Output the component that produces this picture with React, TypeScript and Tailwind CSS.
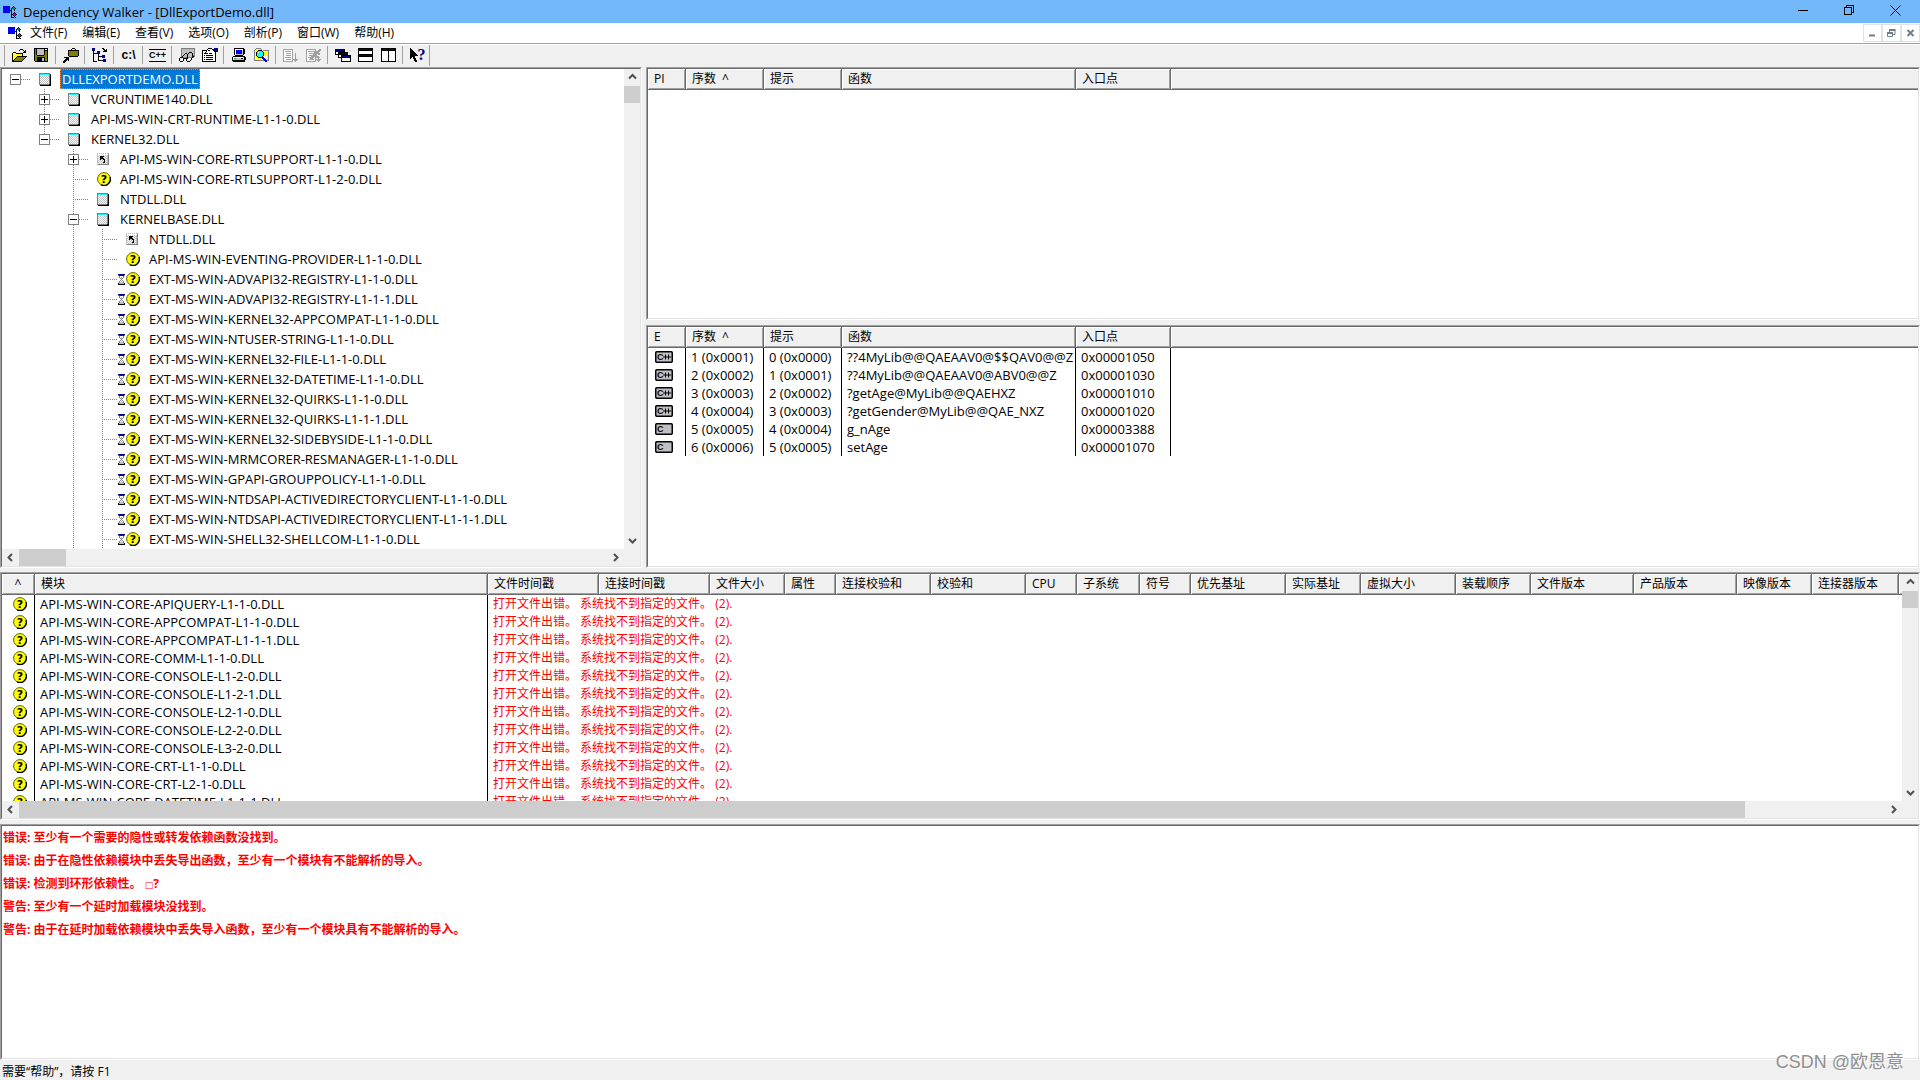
import React from "react";
import { clsx } from "clsx";

const PALETTE: Record<string, string> = {
  k: "#000000",
  o: "#808000",
  y: "#ffff00",
  b: "#0000ff",
  n: "#000080",
  w: "#ffffff",
  g: "#808080",
  s: "#c0c0c0",
  a: "#a0a0a0",
  c: "#00ffff",
  t: "#008080",
  m: "#c000c0",
  e: "#00c000",
};

const APP_ICON = [
  "bbbbbbb...k...",
  "bbbbbbb..ktk..",
  "bbbbbbb.ktttk.",
  "bbbbbbb.k.tk..",
  "bbbbbbbkk..k..",
  "bbbbbbb.k.....",
  "bbbbbbb.k..k..",
  "........k.kmk.",
  "........kkmmmk",
  "........k.kmk.",
  "........k..k..",
  "........kkkek.",
];

const OPEN = [
  ".........kkk....",
  "........k...k.k.",
  ".............kk.",
  "..kkk.......kkk.",
  ".kywykkkkkkk....",
  ".kwywywywywk....",
  ".kywywywywyk....",
  ".kwywykkkkkkkkkk",
  ".kywykooooooook.",
  ".kwykooooooook..",
  ".kykooooooook...",
  ".kkooooooook....",
  ".kkkkkkkkkk.....",
];

const SAVE = [
  "kkkkkkkkkkkkkk..",
  "kokssssssskwwk..",
  "kokssssssskkkk..",
  "kokssssssskook..",
  "kokssssssskook..",
  "kokssssssskook..",
  "kokssssssskook..",
  "kookkkkkkkoook..",
  "kooooooooooook..",
  "kookkkkkkkkook..",
  "kookkkkksskook..",
  "kookkkkksskook..",
  "kookkkkksskook..",
  ".kkkkkkkkkkkkk..",
];

const CONFIGURE = [
  ".........kkk....",
  "........k...k...",
  ".....kkkkkkkkkkk",
  ".....koooooooook",
  ".....koooooooook",
  ".....koooooooook",
  ".....koooooooook",
  ".....koooooooook",
  "......kkkkkkkkk.",
  ".kkkkk..........",
  "...kkk..........",
  "..kkkk..........",
  ".kkk.k..........",
  "kkk.............",
  "kk..............",
];

const AUTO_EXPAND = [
  "nnn.......kk....",
  "nbn........kk.k.",
  "nnn.........kkk.",
  ".k...nnn...kkkk.",
  ".k...nbn........",
  ".kkkknnn........",
  ".k....k.........",
  ".k....k...nnn...",
  ".k....kkkknbn...",
  ".k....k...nnn...",
  ".k....k.........",
  ".k....k....nnn..",
  ".k....kkkkknbn..",
  ".kkkk......nnn..",
];

const VIEW = [
  "..gggggggggggggg",
  "..gccccccccccccg",
  "..gssssssssssssg",
  "..gssssssssssssg",
  "..gssssssskkkssg",
  "..gssskksksssksg",
  "..gssksskssssksg",
  "..gsksssksssskgg",
  "..gkssssksssskkg",
  ".kkkggggkggggkg.",
  "k...kkkkk...k...",
  "k...k..k....k...",
  "k...k..k...k....",
  ".kkk....kkk.....",
];

const PROPERTIES = [
  "......kkkk..nnnn",
  ".....kwwwwknnnnn",
  "kkkkkwkkwwwkkknn",
  "kwwwkwwwwwwwkkkn",
  "kwwkwwwwwwwwwk..",
  "kwkkkkwkkkwwwk..",
  "kwwwwwwwwwwwwk..",
  "kwkwkkkkkkkwwk..",
  "kwwwwwwwwwwwwk..",
  "kwkwkkkkkkkwwk..",
  "kwwwwwwwwwwwwk..",
  "kwkwkkkkkkkwwk..",
  "kwwwwwwwwwwwwk..",
  "kkkkkkkkkkkkkk..",
];

const COMPUTER = [
  "...kkkkkkkkkk...",
  "...kwwwwwwwwkk..",
  "...kwbbbbbbskk..",
  "...kwbbbbbbskk..",
  "...kwbbbbbbskk..",
  "...kwbbbbbbskk..",
  "...kwsssssssk...",
  "....kkkkkkkk....",
  "..kkkkkkkkkkkk..",
  ".kwwwwwwwwwwskk.",
  ".kweessssskkskk.",
  ".kwsssssssssskk.",
  ".kkkkkkkkkkkkk..",
  "..kkkkkkkkkkkk..",
];

const SEARCH = [
  "..ggggg.........",
  ".gywywyg........",
  "gwywkkkkwgggggg.",
  "gywkcccckywywyg.",
  "gwkcwcccckywywg.",
  "gykcccccckwywyg.",
  "gwkcccccckywywg.",
  "gykcccccckwywyg.",
  "gwykcccckywywyg.",
  "gywykkkkbbwywyg.",
  "gwywywywbbbywyg.",
  "gywywywywbbbwyg.",
  "ggggggggggbbbgg.",
  "...........bb...",
];

const NEXT_DOC = [
  "aaaaaaaaaa......",
  "awwwwwwwwa......",
  "awaaaaaawa......",
  "awwwwwwwwa......",
  "awwaaaaawa..a...",
  "awwwwwwwwa..a...",
  "awwaaaaawa..a...",
  "awwwwwwwwa..a...",
  "awaaaaaawa..a...",
  "awwwwwwwwa..a...",
  "awwaaaaawaaaaaa.",
  "awwwwwwwwa.aaa..",
  "aaaaaaaaaa..a...",
];

const CLEAR_DOC = [
  "aaaaaaaaaa...aa.",
  "awwwwwwwwa..aaa.",
  "awaaaaaaaaaaaa..",
  "awwwwwwwaaaaa...",
  "awwaaaaaaaaaaa..",
  "awwwwwwaaaa.aa..",
  "awwaaaaaaaa.....",
  "awwwwaaaaaaaa...",
  "awaaaaaawaaaaa..",
  "awwwaaawwa..a...",
  "awwaaaaawaaaaaa.",
  "awwwwwwwwa.aaa..",
  "aaaaaaaaaa..a...",
];

const CASCADE = [
  "kkkkkkkkkk......",
  "knnnnnnnnk......",
  "kkkkkkkkkk......",
  "kwwkkkkkkkkkk...",
  "kwwknnnnnnnnk...",
  "kkkkkkkkkkkkk...",
  "...kwwkkkkkkkkkk",
  "...kwwknnnnnnnnk",
  "...kkkkkkkkkkkkk",
  "......kwwwwwwwwk",
  "......kwwwwwwwwk",
  "......kwwwwwwwwk",
  "......kkkkkkkkkk",
];

const TILE_H = [
  "kkkkkkkkkkkkkkk.",
  "knnnnnnnnnnnnnk.",
  "kkkkkkkkkkkkkkk.",
  "kwwwwwwwwwwwwwk.",
  "kwwwwwwwwwwwwwk.",
  "kwwwwwwwwwwwwwk.",
  "kkkkkkkkkkkkkkk.",
  "knnnnnnnnnnnnnk.",
  "kkkkkkkkkkkkkkk.",
  "kwwwwwwwwwwwwwk.",
  "kwwwwwwwwwwwwwk.",
  "kwwwwwwwwwwwwwk.",
  "kwwwwwwwwwwwwwk.",
  "kkkkkkkkkkkkkkk.",
];

const TILE_V = [
  "kkkkkkkkkkkkkkk.",
  "knnnnnnknnnnnnk.",
  "kkkkkkkkkkkkkkk.",
  "kwwwwwwkwwwwwwk.",
  "kwwwwwwkwwwwwwk.",
  "kwwwwwwkwwwwwwk.",
  "kwwwwwwkwwwwwwk.",
  "kwwwwwwkwwwwwwk.",
  "kwwwwwwkwwwwwwk.",
  "kwwwwwwkwwwwwwk.",
  "kwwwwwwkwwwwwwk.",
  "kwwwwwwkwwwwwwk.",
  "kwwwwwwkwwwwwwk.",
  "kkkkkkkkkkkkkkk.",
];

const POINTER = [
  "k.......",
  "kk......",
  "kkk.....",
  "kkkk....",
  "kkkkk...",
  "kkkkkk..",
  "kkkkkkk.",
  "kkkkkkkk",
  "kkkkk...",
  "kk.kk...",
  "k..kkk..",
  "....kk..",
  "....kkk.",
  ".....kk.",
];

const MODULE = [
  "ggggggggggg.",
  "gcccccccccgk",
  "gwwwwwwwwwgk",
  "gswswswswsgk",
  "gwswswswswgk",
  "gswswswswsgk",
  "gwswswswswgk",
  "gswswswswsgk",
  "gwswswswswgk",
  "gswswswswsgk",
  "gwswswswswgk",
  "ggggggggggkk",
  ".kkkkkkkkkkk",
];

const DUPLICATE = [
  "swcwcwcwcwcs",
  "swwwwwwwwwwg",
  "swswswswswsg",
  "sswkkkkswssg",
  "swskkkswswsg",
  "sswkkkkswssg",
  "swsksskkswsg",
  "sswswswkwssg",
  "swswswskswsg",
  "sswswskkwssg",
  "swswswswswsg",
  "sggggggggggg",
];

const HOURGLASS = [
  "nnnnnnn",
  "gbbbbbg",
  ".gwwwg.",
  ".gwswg.",
  "..gsg..",
  "...g...",
  "..gwg..",
  ".gwswg.",
  ".gsssg.",
  "ksssssk",
  "kkkkkkk",
];

function Pixels({ rows }: { rows: string[] }) {
  return (
    <svg
      width={rows[0].length}
      height={rows.length}
      viewBox={`0 0 ${rows[0].length} ${rows.length}`}
      shapeRendering="crispEdges"
      className="shrink-0"
      aria-hidden="true"
    >
      {rows.map((row, y) =>
        row.split("").map((p, x) => (PALETTE[p] ? <rect key={`${x}-${y}`} x={x} y={y} width="1" height="1" fill={PALETTE[p]} /> : null))
      )}
    </svg>
  );
}

function MissingIcon() {
  return (
    <svg width="14" height="14" viewBox="0 0 14 14" className="shrink-0" aria-hidden="true">
      <circle cx="7" cy="7" r="6.4" fill="#ffff00" stroke="#606000" strokeWidth="1" />
      <path d="M13 5 A6.4 6.4 0 0 1 4 12.8" fill="none" stroke="#000" strokeWidth="1.3" />
      <text x="7" y="11" textAnchor="middle" fontSize="11" fontWeight="900" fontFamily="DejaVu Sans" fill="#000">?</text>
    </svg>
  );
}

function ExportIcon({ label }: { label: string }) {
  return (
    <svg width="18" height="12" viewBox="0 0 18 12" aria-hidden="true">
      <rect x="0.75" y="0.75" width="16.5" height="10.5" rx="1" fill="#c0c0c0" stroke="#000" strokeWidth="1.5" />
      <text x="2" y="9" fontSize="9" fontWeight="700" fontFamily="Liberation Sans" fill="#000">{label.slice(0, 1)}</text>
      {label.length > 1 && <path d="M8 6h8M10.5 3.5v5M13.5 3.5v5" stroke="#000" strokeWidth="1" />}
    </svg>
  );
}

function Sunken({ children, className }: { children?: React.ReactNode; className?: string }) {
  return (
    <section className={clsx("min-h-0 min-w-0 overflow-hidden border border-t-[#a0a0a0] border-l-[#a0a0a0] border-r-white border-b-white", className)}>
      <div className="h-full overflow-hidden border border-t-[#696969] border-l-[#696969] border-r-[#e3e3e3] border-b-[#e3e3e3] bg-white">
        {children}
      </div>
    </section>
  );
}

const ARROWS = {
  up: "M5 9.5 8.5 6 12 9.5",
  down: "M5 7 8.5 10.5 12 7",
  left: "M10 5 6.5 8.5 10 12",
  right: "M7 5 10.5 8.5 7 12",
};

function ArrowButton({ dir }: { dir: keyof typeof ARROWS }) {
  return (
    <button type="button" aria-label={`Scroll ${dir}`} className="size-[17px] shrink-0">
      <svg width="17" height="17" viewBox="0 0 17 17">
        <path d={ARROWS[dir]} fill="none" stroke="#505050" strokeWidth="2" />
      </svg>
    </button>
  );
}

function VScroll() {
  return (
    <div className="flex w-4 shrink-0 flex-col bg-[#f0f0f0]">
      <ArrowButton dir="up" />
      <div className="flex-1">
        <div className="h-[17px] bg-[#cdcdcd]" />
      </div>
      <ArrowButton dir="down" />
    </div>
  );
}

function HScroll({ thumb }: { thumb: string }) {
  return (
    <div className="flex h-[17px] shrink-0 bg-[#f0f0f0] pr-4">
      <ArrowButton dir="left" />
      <div className="flex-1">
        <div className={clsx("h-full bg-[#cdcdcd]", thumb)} />
      </div>
      <ArrowButton dir="right" />
    </div>
  );
}

const MENUS = ["文件(F)", "编辑(E)", "查看(V)", "选项(O)", "剖析(P)", "窗口(W)", "帮助(H)"];

const TOOLBAR: { label: string; icon: React.ReactNode }[][] = [
  [
    { label: "Open", icon: <Pixels rows={OPEN} /> },
    { label: "Save", icon: <Pixels rows={SAVE} /> },
  ],
  [{ label: "Configure search order", icon: <Pixels rows={CONFIGURE} /> }],
  [{ label: "Auto expand", icon: <Pixels rows={AUTO_EXPAND} /> }],
  [{ label: "Full paths", icon: <span className="font-['Liberation_Sans'] text-xs font-bold">c:\</span> }],
  [
    {
      label: "Undecorate C++ functions",
      icon: <span className="border-y border-black font-['Liberation_Sans'] text-[9px] leading-[11px] font-bold">C++</span>,
    },
  ],
  [
    { label: "View module", icon: <Pixels rows={VIEW} /> },
    { label: "Properties", icon: <Pixels rows={PROPERTIES} /> },
  ],
  [
    { label: "System information", icon: <Pixels rows={COMPUTER} /> },
    { label: "Find", icon: <Pixels rows={SEARCH} /> },
  ],
  [
    { label: "Start profiling", icon: <Pixels rows={NEXT_DOC} /> },
    { label: "Terminate", icon: <Pixels rows={CLEAR_DOC} /> },
  ],
  [
    { label: "Cascade", icon: <Pixels rows={CASCADE} /> },
    { label: "Tile horizontally", icon: <Pixels rows={TILE_H} /> },
    { label: "Tile vertically", icon: <Pixels rows={TILE_V} /> },
  ],
  [
    {
      label: "Help",
      icon: (
        <>
          <Pixels rows={POINTER} />
          <span className="font-['Liberation_Serif'] text-base leading-4 font-bold text-[#000080]">?</span>
        </>
      ),
    },
  ],
];

type TreeItem = {
  name: string;
  level: number;
  kind: "module" | "dup" | "missing" | "delay";
  box?: "+" | "-";
  // connector levels that carry a vertical line through this row
  lines?: number[];
  last?: boolean;
};

const ext = (name: string): TreeItem => ({ name, level: 3, kind: "delay", lines: [2] });

const TREE: TreeItem[] = [
  { name: "DLLEXPORTDEMO.DLL", level: 0, kind: "module", box: "-" },
  { name: "VCRUNTIME140.DLL", level: 1, kind: "module", box: "+" },
  { name: "API-MS-WIN-CRT-RUNTIME-L1-1-0.DLL", level: 1, kind: "module", box: "+" },
  { name: "KERNEL32.DLL", level: 1, kind: "module", box: "-", last: true },
  { name: "API-MS-WIN-CORE-RTLSUPPORT-L1-1-0.DLL", level: 2, kind: "dup", box: "+" },
  { name: "API-MS-WIN-CORE-RTLSUPPORT-L1-2-0.DLL", level: 2, kind: "missing" },
  { name: "NTDLL.DLL", level: 2, kind: "module" },
  { name: "KERNELBASE.DLL", level: 2, kind: "module", box: "-" },
  { name: "NTDLL.DLL", level: 3, kind: "dup", lines: [2] },
  { name: "API-MS-WIN-EVENTING-PROVIDER-L1-1-0.DLL", level: 3, kind: "missing", lines: [2] },
  ext("EXT-MS-WIN-ADVAPI32-REGISTRY-L1-1-0.DLL"),
  ext("EXT-MS-WIN-ADVAPI32-REGISTRY-L1-1-1.DLL"),
  ext("EXT-MS-WIN-KERNEL32-APPCOMPAT-L1-1-0.DLL"),
  ext("EXT-MS-WIN-NTUSER-STRING-L1-1-0.DLL"),
  ext("EXT-MS-WIN-KERNEL32-FILE-L1-1-0.DLL"),
  ext("EXT-MS-WIN-KERNEL32-DATETIME-L1-1-0.DLL"),
  ext("EXT-MS-WIN-KERNEL32-QUIRKS-L1-1-0.DLL"),
  ext("EXT-MS-WIN-KERNEL32-QUIRKS-L1-1-1.DLL"),
  ext("EXT-MS-WIN-KERNEL32-SIDEBYSIDE-L1-1-0.DLL"),
  ext("EXT-MS-WIN-MRMCORER-RESMANAGER-L1-1-0.DLL"),
  ext("EXT-MS-WIN-GPAPI-GROUPPOLICY-L1-1-0.DLL"),
  ext("EXT-MS-WIN-NTDSAPI-ACTIVEDIRECTORYCLIENT-L1-1-0.DLL"),
  ext("EXT-MS-WIN-NTDSAPI-ACTIVEDIRECTORYCLIENT-L1-1-1.DLL"),
  ext("EXT-MS-WIN-SHELL32-SHELLCOM-L1-1-0.DLL"),
];

function Connector({ top, bottom, branch, box }: { top?: boolean; bottom?: boolean; branch?: boolean; box?: "+" | "-" }) {
  return (
    <svg width="29" height="20" viewBox="0 0 29 20" shapeRendering="crispEdges" className="shrink-0" aria-hidden="true">
      <g stroke="#808080" strokeWidth="1" strokeDasharray="1 1" fill="none">
        {top && <path d="M13.5 0V10" />}
        {bottom && <path d="M13.5 10V20" />}
        {branch && <path d="M13 10.5H29" />}
      </g>
      {box && (
        <>
          <rect x="8.5" y="5.5" width="10" height="10" fill="#fff" stroke="#808080" />
          <path d={box === "+" ? "M10 10.5h7M13.5 7v7" : "M10 10.5h7"} stroke="#000" />
        </>
      )}
    </svg>
  );
}

function TreeRow({ item, selected }: { item: TreeItem; selected: boolean }) {
  const node = (
    <Connector top={item.level > 0} bottom={item.level > 0 && !item.last} branch box={item.box} />
  );
  return (
    <li className="flex h-5 items-center">
      {Array.from({ length: item.level }, (_, i) => (
        <Connector key={i} top={item.lines?.includes(i)} bottom={item.lines?.includes(i)} />
      ))}
      {item.box ? (
        <button type="button" aria-label={item.box === "+" ? "Expand" : "Collapse"} className="h-5 w-[29px] shrink-0">
          {node}
        </button>
      ) : (
        node
      )}
      <span className="flex w-[29px] shrink-0 items-center">
        <span className="w-2 shrink-0">{item.kind === "delay" && <Pixels rows={HOURGLASS} />}</span>
        {item.kind === "module" && <Pixels rows={MODULE} />}
        {item.kind === "dup" && <Pixels rows={DUPLICATE} />}
        {(item.kind === "missing" || item.kind === "delay") && <MissingIcon />}
      </span>
      <span
        className={clsx(
          "px-0.5 text-[13px] leading-5 whitespace-nowrap",
          selected && "bg-[#0078d7] text-white outline outline-dotted -outline-offset-1 outline-[#ff8728]"
        )}
      >
        {item.name}
      </span>
    </li>
  );
}

const TH =
  "h-[21px] overflow-hidden border-r border-b border-[#696969] bg-[#f0f0f0] leading-[18px] font-normal whitespace-nowrap shadow-[inset_1px_1px_0_#fff,inset_-1px_-1px_0_#a0a0a0]";
const TH_TEXT = "pl-1.5 text-left";
const TH_FILL = "border-b border-[#696969] bg-[#f0f0f0] shadow-[inset_1px_1px_0_#fff,inset_0_-1px_0_#a0a0a0]";
const TD = "h-[18px] overflow-hidden border-r border-black pl-[5px] text-[13px] leading-[18px] whitespace-nowrap";

const EXPORTS = [
  ["C++", "1 (0x0001)", "0 (0x0000)", "??4MyLib@@QAEAAV0@$$QAV0@@Z", "0x00001050"],
  ["C++", "2 (0x0002)", "1 (0x0001)", "??4MyLib@@QAEAAV0@ABV0@@Z", "0x00001030"],
  ["C++", "3 (0x0003)", "2 (0x0002)", "?getAge@MyLib@@QAEHXZ", "0x00001010"],
  ["C++", "4 (0x0004)", "3 (0x0003)", "?getGender@MyLib@@QAE_NXZ", "0x00001020"],
  ["C", "5 (0x0005)", "4 (0x0004)", "g_nAge", "0x00003388"],
  ["C", "6 (0x0006)", "5 (0x0005)", "setAge", "0x00001070"],
];

function FunctionTable({ first, rows }: { first: string; rows: string[][] }) {
  return (
    <table className="w-full table-fixed border-separate border-spacing-0">
      <colgroup>
        <col className="w-[38px]" />
        <col className="w-[78px]" />
        <col className="w-[78px]" />
        <col className="w-[234px]" />
        <col className="w-[95px]" />
        <col />
      </colgroup>
      <thead>
        <tr>
          <th className={clsx(TH, TH_TEXT)}>{first}</th>
          <th className={clsx(TH, TH_TEXT)}>
            <span className="flex gap-1.5">
              序数<span>^</span>
            </span>
          </th>
          <th className={clsx(TH, TH_TEXT)}>提示</th>
          <th className={clsx(TH, TH_TEXT)}>函数</th>
          <th className={clsx(TH, TH_TEXT)}>入口点</th>
          <td className={TH_FILL} />
        </tr>
      </thead>
      <tbody>
        {rows.map(([kind, ...cells]) => (
          <tr key={cells[0]}>
            <td className="border-r border-black pl-[7px]">
              <span className="flex">
                <ExportIcon label={kind} />
              </span>
            </td>
            {cells.map((cell, i) => (
              <td key={i} className={TD}>{cell}</td>
            ))}
            <td />
          </tr>
        ))}
      </tbody>
    </table>
  );
}

const MODULE_COLUMNS: [string, string][] = [
  ["模块", "w-[453px]"],
  ["文件时间戳", "w-[111px]"],
  ["连接时间戳", "w-[111px]"],
  ["文件大小", "w-[75px]"],
  ["属性", "w-[51px]"],
  ["连接校验和", "w-[95px]"],
  ["校验和", "w-[95px]"],
  ["CPU", "w-[51px]"],
  ["子系统", "w-[63px]"],
  ["符号", "w-[51px]"],
  ["优先基址", "w-[95px]"],
  ["实际基址", "w-[75px]"],
  ["虚拟大小", "w-[95px]"],
  ["装载顺序", "w-[75px]"],
  ["文件版本", "w-[103px]"],
  ["产品版本", "w-[103px]"],
  ["映像版本", "w-[75px]"],
  ["连接器版本", "w-[87px]"],
];

const MODULES = [
  "API-MS-WIN-CORE-APIQUERY-L1-1-0.DLL",
  "API-MS-WIN-CORE-APPCOMPAT-L1-1-0.DLL",
  "API-MS-WIN-CORE-APPCOMPAT-L1-1-1.DLL",
  "API-MS-WIN-CORE-COMM-L1-1-0.DLL",
  "API-MS-WIN-CORE-CONSOLE-L1-2-0.DLL",
  "API-MS-WIN-CORE-CONSOLE-L1-2-1.DLL",
  "API-MS-WIN-CORE-CONSOLE-L2-1-0.DLL",
  "API-MS-WIN-CORE-CONSOLE-L2-2-0.DLL",
  "API-MS-WIN-CORE-CONSOLE-L3-2-0.DLL",
  "API-MS-WIN-CORE-CRT-L1-1-0.DLL",
  "API-MS-WIN-CORE-CRT-L2-1-0.DLL",
  "API-MS-WIN-CORE-DATETIME-L1-1-1.DLL",
];

const LOG: React.ReactNode[] = [
  "错误: 至少有一个需要的隐性或转发依赖函数没找到。",
  "错误: 由于在隐性依赖模块中丢失导出函数，至少有一个模块有不能解析的导入。",
  <>
    错误: 检测到环形依赖性。 <span className="font-['DejaVu_Sans'] text-[9px] font-normal">□</span>?
  </>,
  "警告: 至少有一个延时加载模块没找到。",
  "警告: 由于在延时加载依赖模块中丢失导入函数，至少有一个模块具有不能解析的导入。",
];

function ModuleTable() {
  return (
    <table className="w-full table-fixed border-separate border-spacing-0">
      <colgroup>
        <col className="w-[33px]" />
        {MODULE_COLUMNS.map(([name, width]) => (
          <col key={name} className={width} />
        ))}
        <col />
      </colgroup>
      <thead>
        <tr>
          <th className={clsx(TH, "text-center")}>^</th>
          {MODULE_COLUMNS.map(([name]) => (
            <th key={name} className={clsx(TH, TH_TEXT)}>{name}</th>
          ))}
          <td className={TH_FILL} />
        </tr>
      </thead>
      <tbody>
        {MODULES.map((name) => (
          <tr key={name}>
            <td className="border-r border-black pl-[11px]">
              <span className="flex">
                <MissingIcon />
              </span>
            </td>
            <td className={TD}>{name}</td>
            <td colSpan={18} className="h-[18px] pl-[5px] leading-[18px] whitespace-nowrap text-[#ff0000]">
              打开文件出错。 系统找不到指定的文件。 (2).
            </td>
          </tr>
        ))}
      </tbody>
    </table>
  );
}

const CAPTION_BUTTON = "flex h-[21px] w-[46px] items-center justify-center";
const MDI_BUTTON = "flex h-[18px] w-[19px] items-center justify-center border border-[#e3e3e3] bg-white";

export default function App() {
  return (
    <div className="relative flex h-screen flex-col overflow-hidden bg-[#f0f0f0] font-['Open_Sans','Noto_Sans_CJK_SC',sans-serif] text-xs text-black">
      <header className="flex h-[23px] shrink-0 items-start bg-[#74b8fc] pr-0.5 pl-[3px]">
        <span className="pt-1.5">
          <Pixels rows={APP_ICON} />
        </span>
        <h1 className="ml-1.5 flex-1 text-[13px] leading-6">Dependency Walker - [DllExportDemo.dll]</h1>
        <button type="button" aria-label="Minimize" className={CAPTION_BUTTON}>
          <svg width="11" height="11" viewBox="0 0 11 11" shapeRendering="crispEdges"><path d="M0 5.5h10" stroke="#000" /></svg>
        </button>
        <button type="button" aria-label="Restore" className={CAPTION_BUTTON}>
          <svg width="11" height="11" viewBox="0 0 11 11" shapeRendering="crispEdges" fill="none" stroke="#000">
            <path d="M.5 2.5h7v7h-7zM2.5 2.5v-2h7v7h-2" />
          </svg>
        </button>
        <button type="button" aria-label="Close" className={CAPTION_BUTTON}>
          <svg width="11" height="11" viewBox="0 0 11 11"><path d="M.5.5l10 10M10.5.5l-10 10" stroke="#000" /></svg>
        </button>
      </header>

      <nav className="flex h-5 shrink-0 items-center bg-white pl-2">
        <Pixels rows={APP_ICON} />
        <div className="ml-px flex flex-1 gap-px">
          {MENUS.map((m) => (
            <button key={m} type="button" className="px-[7px] leading-5 whitespace-nowrap">{m}</button>
          ))}
        </div>
        <button type="button" aria-label="Minimize document" className={MDI_BUTTON}>
          <svg width="9" height="8" viewBox="0 0 9 8"><path d="M1 6.5h6" stroke="#6f7f90" strokeWidth="2" /></svg>
        </button>
        <button type="button" aria-label="Restore document" className={MDI_BUTTON}>
          <svg width="9" height="8" viewBox="0 0 9 8" fill="none" stroke="#6f7f90">
            <path d="M.5 4v3.5h5V4M2.5 3V1M8 1v4.5H6" />
            <path d="M0 4h6M2 1h6.5" strokeWidth="2" />
          </svg>
        </button>
        <button type="button" aria-label="Close document" className={MDI_BUTTON}>
          <svg width="9" height="8" viewBox="0 0 9 8"><path d="M1.5 1l6 6M7.5 1l-6 6" stroke="#6f7f90" strokeWidth="2" /></svg>
        </button>
      </nav>

      <div className="flex h-6 shrink-0 items-start border-t border-[#a0a0a0] pl-1 shadow-[inset_0_1px_0_#fff]">
        <span className="mt-px mr-0.5 h-[21px] w-px bg-[#a0a0a0]" />
        {TOOLBAR.map((group, i) => (
          <div key={i} className="flex items-center">
            {i > 0 && <span className="mr-[3px] ml-0.5 h-[18px] w-px bg-[#a0a0a0]" />}
            {group.map((tool) => (
              <button key={tool.label} type="button" title={tool.label} className="flex h-[22px] w-[23px] items-center justify-center">
                {tool.icon}
              </button>
            ))}
          </div>
        ))}
        <span className="mt-px h-[21px] w-px bg-[#a0a0a0]" />
      </div>

      <main className="grid min-h-0 flex-1 grid-cols-1 grid-rows-[501fr_248fr_236fr] gap-1">
        <div className="grid min-h-0 grid-cols-[642fr_1274fr] grid-rows-1 gap-1">
          <Sunken>
            <div className="flex h-full flex-col">
              <div className="flex min-h-0 flex-1">
                <ul className="min-w-0 flex-1 overflow-hidden">
                  {TREE.map((item, i) => (
                    <TreeRow key={i} item={item} selected={i === 0} />
                  ))}
                </ul>
                <VScroll />
              </div>
              <HScroll thumb="w-[47px]" />
            </div>
          </Sunken>
          <div className="grid min-h-0 min-w-0 grid-cols-1 grid-rows-[253fr_243fr] gap-[5px]">
            <Sunken>
              <FunctionTable first="PI" rows={[]} />
            </Sunken>
            <Sunken>
              <FunctionTable first="E" rows={EXPORTS} />
            </Sunken>
          </div>
        </div>

        <Sunken>
          <div className="flex h-full flex-col">
            <div className="flex min-h-0 flex-1">
              <div className="min-w-0 flex-1 overflow-hidden">
                <ModuleTable />
              </div>
              <VScroll />
            </div>
            <HScroll thumb="w-[92.5%]" />
          </div>
        </Sunken>

        <Sunken>
          <div className="pl-px font-bold text-[#ff0000]">
            {LOG.map((line, i) => (
              <p key={i} className="h-[23px] leading-[23px]">{line}</p>
            ))}
          </div>
        </Sunken>
      </main>

      <footer className="h-5 shrink-0 pl-0.5 leading-6">需要“帮助”，请按 F1</footer>

      <div className="absolute right-4 bottom-1 font-['Liberation_Sans','Noto_Sans_CJK_SC',sans-serif] text-lg leading-7 text-[#8f8f8f] [text-shadow:1px_1px_0_#fff]">
        CSDN @欧恩意
      </div>
    </div>
  );
}
